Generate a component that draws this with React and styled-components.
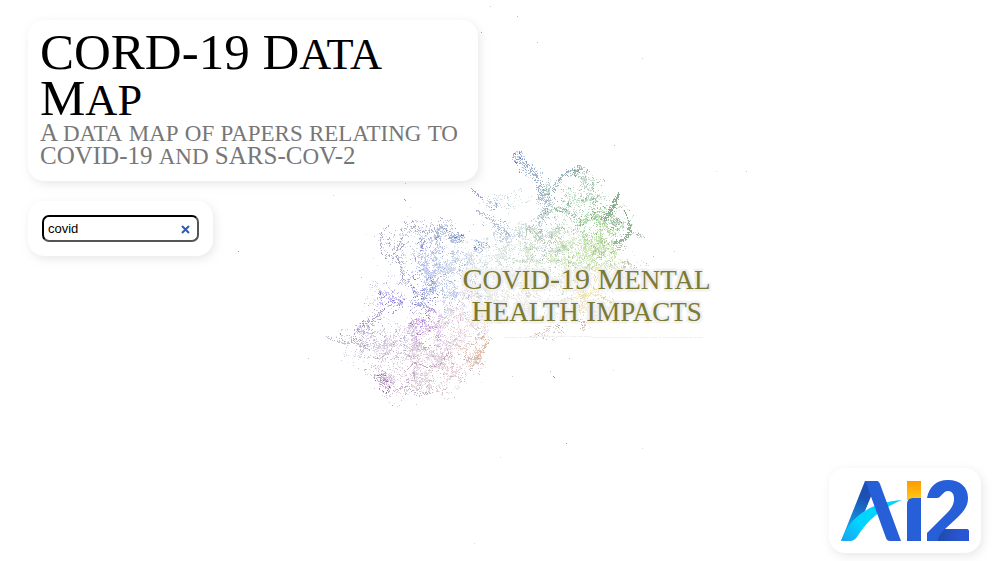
import React, { useId } from "react";
import styled, { createGlobalStyle } from "styled-components";

const GlobalStyle = createGlobalStyle`
  *, *::before, *::after { box-sizing: border-box; }
  body { margin: 0; background: #fff; font-family: "Liberation Serif", serif; }
`;

const Page = styled.main`
  position: relative;
  min-height: 100vh;
  display: flex;
  flex-direction: column;
  justify-content: space-between;
  gap: 20px;
  padding: 20px 16px 8px 28px;
  overflow: hidden;
`;

const MapLayer = styled.div`
  position: absolute;
  inset: 0;
`;

const MapSvg = styled.svg`
  display: block;
  width: 100%;
  height: 100%;
`;

const TopicLabel = styled.div`
  position: absolute;
  left: calc(50% + 88px);
  top: calc(50% - 18px);
  transform: translate(-50%, 0);
  color: #7b7a32;
  font-size: 30px;
  line-height: 32px;
  text-align: center;
  white-space: nowrap;
  text-shadow: 0 0 2px #eee, 0 0 3px #eee, 0 0 4px #eee, 2px 2px 2px #eee, -2px -2px 2px #eee,
    2px -2px 2px #eee, -2px 2px 2px #eee;
`;

const Line = styled.span`
  display: block;
`;

const Controls = styled.div`
  position: relative;
  display: flex;
  flex-direction: column;
  align-items: flex-start;
  gap: 20px;
`;

const Panel = styled.section`
  background: #fff;
  border-radius: 16px;
  padding: ${(p) => p.$padding || "12px"};
  box-shadow: 2px 3px 10px rgba(170, 170, 170, 0.27);
`;

const TitlePanel = styled(Panel)`
  width: 450px;
  max-width: 100%;
`;

const Title = styled.h1`
  margin: 0;
  font-size: 51px;
  font-weight: 400;
  line-height: 46px;
  color: #000;
`;

const Subtitle = styled.p`
  margin: 0;
  font-size: 25px;
  line-height: 23px;
  color: #777;
`;

const Small = styled.span`
  font-size: ${(p) => p.$scale}em;
  line-height: 0;
  text-transform: uppercase;
`;

const SearchBox = styled.div`
  display: flex;
  align-items: center;
  width: 157px;
  height: 27px;
  padding: 0 7px 0 4px;
  border: 2px solid;
  border-color: #000 #555 #555 #000;
  border-radius: 7px;
`;

const SearchInput = styled.input`
  flex: 1;
  min-width: 0;
  padding: 0;
  border: 0;
  outline: 0;
  background: transparent;
  color: #000;
  font: 13px "Liberation Sans", Arial, sans-serif;
`;

const ClearButton = styled.button`
  display: flex;
  padding: 1px 0 0;
  border: 0;
  background: none;
  color: #2e5fa8;
  cursor: pointer;
`;

const LogoPanel = styled(Panel)`
  position: relative;
  align-self: flex-end;
`;

const LogoSvg = styled.svg`
  display: block;
`;

/* Seeded generator, so that the map is the same on every load. */
function makeRandom(seed) {
  let s = seed;
  return () => {
    s = (s + 0x6d2b79f5) | 0;
    let t = Math.imul(s ^ (s >>> 15), 1 | s);
    t = (t + Math.imul(t ^ (t >>> 7), 61 | t)) ^ t;
    return ((t ^ (t >>> 14)) >>> 0) / 4294967296;
  };
}

function hash(x, y) {
  let h = Math.imul(x, 374761393) + Math.imul(y, 668265263);
  h = Math.imul(h ^ (h >>> 13), 1274126177);
  return ((h ^ (h >>> 16)) >>> 0) / 4294967296;
}

function noise(x, y) {
  const xi = Math.floor(x);
  const yi = Math.floor(y);
  const u = x - xi;
  const v = y - yi;
  const su = u * u * (3 - 2 * u);
  const sv = v * v * (3 - 2 * v);
  const a = hash(xi, yi);
  const b = hash(xi + 1, yi);
  const c = hash(xi, yi + 1);
  const d = hash(xi + 1, yi + 1);
  return a + (b - a) * su + (c - a) * sv + (a - b - c + d) * su * sv;
}

/* Clusters: centre x, centre y, radius x, radius y, tilt in degrees, point count, colour. */
const CLUSTERS = [
  [393, 244, 12, 15, 0, 130, "#b9b9d4"],
  [403, 265, 4, 20, -12, 70, "#b3b3cf"],
  [425, 230, 22, 8, 4, 180, "#b5b9d3"],
  [446, 231, 13, 8, 20, 220, "#a5b6da"],
  [457, 237, 7, 6, 30, 130, "#86a3d6"],
  [479, 245, 7, 6, 10, 100, "#8fabda"],
  [430, 262, 17, 26, 0, 520, "#a8b2e6"],
  [425, 290, 12, 22, 15, 460, "#9d9fe6"],
  [450, 275, 25, 22, -10, 950, "#b3c4e8"],
  [455, 288, 18, 26, 0, 600, "#b5c2e8"],
  [490, 262, 40, 24, -12, 1200, "#d0dce4"],
  [515, 240, 30, 16, -20, 260, "#c9d5e4"],
  [392, 300, 12, 10, 25, 260, "#a79af0"],
  [382, 290, 22, 9, -38, 110, "#ccc6ee"],
  [368, 322, 18, 6, -35, 170, "#b3a6da"],
  [350, 340, 20, 4, 8, 90, "#bdb8cc"],
  [372, 347, 30, 13, 14, 420, "#c9c2d5"],
  [395, 340, 25, 16, 0, 440, "#c6bcdb"],
  [428, 327, 18, 18, -10, 520, "#d0abe8"],
  [420, 325, 9, 9, 0, 120, "#b288e5"],
  [412, 355, 30, 24, -20, 620, "#d4bdd7"],
  [445, 340, 30, 28, -20, 860, "#e4cad8"],
  [385, 381, 8, 9, 10, 180, "#b28cc0"],
  [408, 378, 28, 17, -15, 520, "#d3c0d5"],
  [438, 377, 26, 15, -10, 430, "#dfcdd0"],
  [450, 360, 22, 14, -20, 230, "#dfc4c6"],
  [475, 350, 16, 10, -45, 240, "#e3c5b2"],
  [468, 318, 24, 22, -20, 520, "#edd9e1"],
  [500, 298, 35, 20, -6, 850, "#eadde4"],
  [520, 280, 45, 24, 0, 1100, "#dcebd9"],
  [547, 235, 15, 24, -5, 650, "#b8cfcd"],
  [544, 203, 6, 19, 5, 300, "#a5bcca"],
  [519, 158, 6, 5, 20, 80, "#7f93d9"],
  [530, 172, 9, 6, 20, 70, "#9fb9d9"],
  [576, 172, 9, 4, -8, 70, "#9fb7b4"],
  [585, 180, 7, 15, -25, 130, "#aac8bb"],
  [570, 205, 24, 22, 0, 560, "#a9d2b7"],
  [592, 195, 13, 20, -25, 200, "#b7d5be"],
  [560, 250, 45, 24, 0, 1400, "#cbdfbf"],
  [598, 224, 19, 15, -15, 650, "#98cf92"],
  [600, 245, 14, 20, 0, 800, "#bce29c"],
  [575, 255, 25, 14, 0, 500, "#c4e4a4"],
  [617, 220, 4, 4, 0, 60, "#84ad8c"],
  [622, 225, 12, 18, 5, 120, "#b5ceb7"],
  [606, 270, 24, 14, 0, 440, "#d5e6b9"],
  [625, 268, 18, 10, 0, 150, "#cbd5bf"],
  [592, 292, 17, 18, 0, 600, "#eadfa0"],
  [577, 305, 25, 18, 0, 400, "#e9dec2"],
  [545, 298, 35, 18, 0, 450, "#eadfd4"],
  [548, 332, 15, 6, -12, 100, "#d8c5bb"],
  [582, 324, 6, 4, 30, 36, "#d1b0a0"],
  [492, 204, 7, 5, -20, 55, "#a5bde0"],
  [500, 197, 22, 4, -18, 45, "#c6d1e1"],
  [500, 226, 18, 7, 20, 70, "#b7c7da"],
  [513, 200, 16, 8, -20, 35, "#c9d8dd"],
  [640, 235, 4, 3, 10, 20, "#acc0b5"],
  [362, 365, 22, 7, 20, 35, "#cfc8e0"],
  [435, 268, 56, 46, 0, 130, "#d3d8e4"],
  [560, 240, 56, 50, 0, 120, "#d4e0d4"],
  [425, 345, 55, 40, 0, 220, "#dbd1df"],
];

/* Thin strands between clusters: colour, spread, dots per pixel of length, points. */
const STRANDS = [
  ["#a9a9c9", 1, 1, [[381, 252], [380, 235], [385, 228], [389, 225]]],
  ["#a9a9c9", 1, 1, [[381, 254], [391, 256], [397, 249], [402, 236]]],
  ["#a9a9c9", 2, 1, [[396, 256], [401, 268], [402, 279], [406, 281]]],
  ["#adb3cf", 3, 1, [[405, 222], [414, 228], [424, 232], [434, 229], [443, 217]]],
  ["#c0bac9", 1, 1, [[326, 336], [334, 340], [343, 343], [355, 342], [370, 350]]],
  ["#ad9dce", 3, 1, [[351, 339], [362, 323], [373, 319], [383, 307]]],
  ["#9bb8c0", 3, 3, [[553, 190], [558, 180], [566, 171], [582, 168]]],
  ["#9fb3cf", 5, 3, [[521, 160], [532, 170], [540, 185], [541, 200]]],
  ["#8db092", 4, 7, [[616, 198], [612, 206], [610, 213], [602, 219]]],
  ["#8db092", 1, 2, [[619, 191], [615, 200]]],
  ["#83a988", 1, 1, [[624, 210], [629, 222]]],
  ["#93b497", 3, 5, [[629, 223], [629, 232], [624, 238], [613, 243]]],
  ["#c3a7ba", 1, 1, [[404, 371], [414, 362], [427, 367], [440, 364], [448, 352]]],
  ["#c6aec6", 2, 1, [[378, 380], [390, 392], [405, 386], [418, 395], [433, 391]]],
  ["#dfbfaa", 3, 2, [[488, 340], [482, 350], [473, 359], [480, 364]]],
  ["#f0f0f0", 0, 1, [[504, 337], [560, 336], [620, 337], [704, 337]]],
  ["#aebfd4", 3, 2, [[476, 209], [488, 217], [500, 228], [510, 236]]],
  ["#9da3dc", 2, 2, [[472, 189], [476, 193], [482, 198]]],
  ["#bfd0bf", 2, 1, [[531, 228], [536, 239], [548, 244], [556, 239]]],
];

const STRAYS = [
  [490, 6, "#ccc"], [517, 16, "#bbb"], [481, 32, "#99e"], [537, 42, "#bbb"], [642, 58, "#ccc"],
  [614, 145, "#bbb"], [746, 171, "#bcc"], [716, 171, "#ddd"], [238, 251, "#88e"], [308, 358, "#c9b3e8"],
  [361, 277, "#bbb"], [405, 183, "#bbb"], [404, 199, "#87d"], [405, 200, "#a8e"], [333, 195, "#ccc"],
  [553, 376, "#b97"], [554, 377, "#a86"], [566, 443, "#999"], [500, 457, "#ddd"], [642, 448, "#ddd"],
  [474, 543, "#ddd"], [569, 358, "#bbb"], [512, 376, "#ccc"], [392, 405, "#aaa"], [416, 404, "#ccc"],
  [454, 397, "#bbb"], [550, 371, "#bbb"], [653, 256, "#bbb"], [674, 251, "#ccc"], [613, 370, "#ddd"],
];

function tone(hex, strength, grey) {
  const n = parseInt(hex.slice(1), 16);
  const channels = [(n >> 16) & 255, (n >> 8) & 255, n & 255];
  const mean = (channels[0] + channels[1] + channels[2]) / 3;
  const mixed = channels.map((c) => {
    const muted = c + (mean - c) * grey;
    return Math.max(0, Math.min(255, Math.round(255 - (255 - muted) * strength)));
  });
  return `rgb(${mixed.join(",")})`;
}

function buildMap() {
  const random = makeRandom(19);
  const byColour = new Map();
  const dot = (x, y, colour) => {
    const d = `M${Math.round(x)} ${Math.round(y)}h1v1h-1z`;
    byColour.set(colour, (byColour.get(colour) || "") + d);
  };
  CLUSTERS.forEach(([cx, cy, rx, ry, tilt, count, colour]) => {
    const a = (tilt * Math.PI) / 180;
    const warp = Math.min(rx, ry) * 1.1;
    const pale = [tone(colour, 0.45, 0), tone(colour, 0.65, 0), tone(colour, 0.9, 0)];
    const dark = [tone(colour, 0.9, 0.3), tone(colour, 1.15, 0.4), tone(colour, 1.4, 0.3)];
    for (let i = 0; i < count * 2; i += 1) {
      const r = Math.pow(random(), 0.65) * 1.15;
      const t = random() * Math.PI * 2;
      const px = Math.cos(t) * r * rx;
      const py = Math.sin(t) * r * ry;
      const ux = cx + px * Math.cos(a) - py * Math.sin(a);
      const uy = cy + px * Math.sin(a) + py * Math.cos(a);
      const x = Math.round(ux + (noise(ux / 7 + 90, uy / 7) - 0.5) * warp);
      const y = Math.round(uy + (noise(ux / 7, uy / 7 + 90) - 0.5) * warp);
      const ridge = Math.abs(noise(x / 6, y / 6) + noise(x / 3 + 40, y / 3) * 0.5 - 0.75);
      if (ridge < 0.05) {
        dot(x, y, dark[Math.floor(random() * 3)]);
      } else if (random() < 0.42) {
        dot(x, y, pale[Math.floor(random() * 3)]);
      }
    }
  });
  STRANDS.forEach(([colour, spread, density, points]) => {
    for (let i = 1; i < points.length; i += 1) {
      const [x0, y0] = points[i - 1];
      const [x1, y1] = points[i];
      const steps = Math.hypot(x1 - x0, y1 - y0) * density;
      for (let k = 0; k < steps; k += 1) {
        const f = k / steps;
        if (random() < 0.85) {
          dot(
            x0 + (x1 - x0) * f + (random() + random() - 1) * spread,
            y0 + (y1 - y0) * f + (random() + random() - 1) * spread,
            colour
          );
        }
      }
    }
  });
  STRAYS.forEach(([x, y, colour]) => dot(x, y, colour));
  return [...byColour];
}

const MAP_DOTS = buildMap();

/* Sets lower-case runs as small capitals. */
function Caps({ children, scale }) {
  return children
    .split(/([a-z]+)/)
    .map((part, i) => (i % 2 ? <Small key={i} $scale={scale}>{part}</Small> : part));
}

function DataMap() {
  return (
    <MapLayer>
      <MapSvg viewBox="0 0 997 561" shapeRendering="crispEdges" role="img" aria-label="Data map">
        {MAP_DOTS.map(([colour, d]) => (
          <path key={colour} d={d} fill={colour} />
        ))}
      </MapSvg>
      <TopicLabel>
        <Line><Caps scale={0.9}>Covid-19 Mental</Caps></Line>
        <Line><Caps scale={0.9}>Health Impacts</Caps></Line>
      </TopicLabel>
    </MapLayer>
  );
}

function Logo() {
  const id = useId();
  return (
    <LogoSvg width="128" height="61" viewBox="0 0 128 61" role="img" aria-label="Ai2">
      <defs>
        <linearGradient id={`${id}leg`} x1="28" y1="6" x2="8" y2="52" gradientUnits="userSpaceOnUse">
          <stop offset="0" stopColor="#1d4fb4" />
          <stop offset="0.25" stopColor="#1b50b5" />
          <stop offset="1" stopColor="#15a9ea" />
        </linearGradient>
        <linearGradient id={`${id}swoosh`} x1="2" y1="60" x2="26" y2="36" gradientUnits="userSpaceOnUse">
          <stop offset="0" stopColor="#1ba5f0" />
          <stop offset="0.7" stopColor="#00d5ff" />
        </linearGradient>
        <linearGradient id={`${id}dot`} x1="0" y1="0" x2="0" y2="1">
          <stop offset="0" stopColor="#ff9a00" />
          <stop offset="1" stopColor="#ffca18" />
        </linearGradient>
        <linearGradient id={`${id}foot`} x1="97" y1="0" x2="120" y2="0" gradientUnits="userSpaceOnUse">
          <stop offset="0" stopColor="#1d4bac" />
          <stop offset="1" stopColor="#2b56d3" />
        </linearGradient>
      </defs>
      <path d="M24 1H37L31 14L17 48L0 61Z" fill={`url(#${id}leg)`} />
      <path d="M0 61C10 35 29 23 61 20C42 28 28 38 16 57Q13 61 9 61Z" fill={`url(#${id}swoosh)`} />
      <path d="M24 1H35Q38 1 39 4L60 61H49Q46 61 45 58L28 11Q27 6 24 1Z" fill="#265fd7" />
      <path d="M66 1H80V18L66 20Z" fill={`url(#${id}dot)`} />
      <path d="M66 61V24Q66 18 72 18H80V61Z" fill="#265fd7" />
      <path d="M86 18C88 7 95 0 107 0C119 0 127 7 127 18C127 26 123 31 117 37L104 49H125Q128 49 128 52V61H86V53L106 33C111 28 113 24 113 19C113 14 111 11 107 11C102 11 100 18 96 18Z" fill="#265fd7" />
      <path d="M104 49H125Q128 49 128 52V61H97Q97 55 104 49Z" fill={`url(#${id}foot)`} />
    </LogoSvg>
  );
}

export default function App() {
  return (
    <>
      <GlobalStyle />
      <Page>
        <DataMap />
        <Controls>
          <TitlePanel $padding="9px 12px 14px">
            <Title><Caps scale={0.87}>CORD-19 Data Map</Caps></Title>
            <Subtitle><Caps scale={0.92}>A data map of papers relating to COVID-19 and SARS-CoV-2</Caps></Subtitle>
          </TitlePanel>
          <Panel $padding="14px">
            <SearchBox>
              <SearchInput type="text" aria-label="Search" defaultValue="covid" />
              <ClearButton type="button" aria-label="Clear search">
                <svg width="9" height="9" viewBox="0 0 9 9">
                  <path d="M1 1L8 8M8 1L1 8" stroke="currentColor" strokeWidth="2" />
                </svg>
              </ClearButton>
            </SearchBox>
          </Panel>
        </Controls>
        <LogoPanel>
          <Logo />
        </LogoPanel>
      </Page>
    </>
  );
}
